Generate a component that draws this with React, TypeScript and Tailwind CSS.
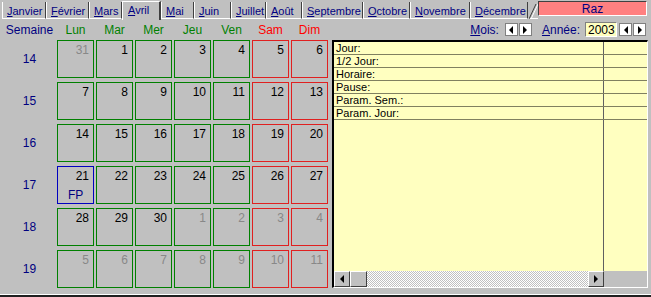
import React from 'react';

const months = [
  { name: 'Janvier', w: 44 },
  { name: 'Février', w: 43 },
  { name: 'Mars', w: 33 },
  { name: 'Avril', w: 39 },
  { name: 'Mai', w: 33 },
  { name: 'Juin', w: 37 },
  { name: 'Juillet', w: 35 },
  { name: 'Août', w: 36 },
  { name: 'Septembre', w: 61 },
  { name: 'Octobre', w: 47 },
  { name: 'Novembre', w: 60 },
  { name: 'Décembre', w: 58 },
];

const days = [
  { name: 'Lun', weekend: false },
  { name: 'Mar', weekend: false },
  { name: 'Mer', weekend: false },
  { name: 'Jeu', weekend: false },
  { name: 'Ven', weekend: false },
  { name: 'Sam', weekend: true },
  { name: 'Dim', weekend: true },
];

// [day, inMonth]
const weeks: { num: number; days: [number, boolean][] }[] = [
  { num: 14, days: [[31, false], [1, true], [2, true], [3, true], [4, true], [5, true], [6, true]] },
  { num: 15, days: [[7, true], [8, true], [9, true], [10, true], [11, true], [12, true], [13, true]] },
  { num: 16, days: [[14, true], [15, true], [16, true], [17, true], [18, true], [19, true], [20, true]] },
  { num: 17, days: [[21, true], [22, true], [23, true], [24, true], [25, true], [26, true], [27, true]] },
  { num: 18, days: [[28, true], [29, true], [30, true], [1, false], [2, false], [3, false], [4, false]] },
  { num: 19, days: [[5, false], [6, false], [7, false], [8, false], [9, false], [10, false], [11, false]] },
];

const fields = ['Jour:', '1/2 Jour:', 'Horaire:', 'Pause:', 'Param. Sem.:', 'Param. Jour:'];

function Arrow({ dir }: { dir: 'left' | 'right' }) {
  return (
    <svg width="6" height="8" viewBox="0 0 6 8">
      {dir === 'left' ? <path d="M5 0 L1 4 L5 8 Z" fill="#000" /> : <path d="M1 0 L5 4 L1 8 Z" fill="#000" />}
    </svg>
  );
}

function SpinButtons() {
  return (
    <div className="flex gap-[1px]">
      <div className="w-[13px] h-[13px] bg-white border border-[#808080] flex items-center justify-center">
        <Arrow dir="left" />
      </div>
      <div className="w-[13px] h-[13px] bg-white border border-[#808080] flex items-center justify-center">
        <Arrow dir="right" />
      </div>
    </div>
  );
}

function Label({ text }: { text: string }) {
  return (
    <span className="text-[#000080]">
      <u>{text[0]}</u>
      {text.slice(1)}
    </span>
  );
}

export default function App() {
  return (
    <div
      className="w-[651px] h-[297px] bg-[#c0c0c0] flex flex-col overflow-hidden text-[11px] leading-none"
      style={{ fontFamily: '"Liberation Sans", Arial, sans-serif' }}
    >
      {/* Month tabs */}
      <div className="h-[19px] flex items-end pl-[2px] shrink-0">
        {months.map((m) =>
          m.name === 'Avril' ? (
            <div
              key={m.name}
              className="h-[19px] flex items-start pt-[3px] pl-[5px] border-l border-t border-white border-r-2 border-r-[#404040] bg-[#c0c0c0] -mb-[1px] relative z-10"
              style={{ width: m.w }}
            >
              <Label text={m.name} />
            </div>
          ) : (
            <div
              key={m.name}
              className="h-[17px] flex items-start pt-[4px] pl-[4px] border-l border-white border-r border-r-[#404040] border-b border-b-white"
              style={{ width: m.w }}
            >
              <Label text={m.name} />
            </div>
          )
        )}
        <div className="h-[17px] w-[10px] border-b border-b-white">
          <svg width="10" height="17" viewBox="0 0 10 17">
            <path d="M1 17 L8 2" stroke="#404040" strokeWidth="1" />
            <path d="M3 17 L10 2" stroke="#ffffff" strokeWidth="1" />
          </svg>
        </div>
        <div className="self-start mt-[1px] h-[15px] w-[109px] bg-[#ff8080] border-t border-l border-[#404040] border-r border-b border-r-white border-b-white flex items-center justify-center text-[#000080] text-[12px]">
          Raz
        </div>
      </div>

      {/* Header row */}
      <div className="h-[21px] flex items-center shrink-0 text-[12px]">
        <div className="w-[57px] text-center text-[#000080] pl-[2px]">Semaine</div>
        <div className="flex gap-[2px]">
          {days.map((d) => (
            <div
              key={d.name}
              className={`w-[37px] text-center ${d.weekend ? 'text-[#ff0000]' : 'text-[#008000]'}`}
            >
              {d.name}
            </div>
          ))}
        </div>
        <div className="flex-1 flex items-center justify-end pr-[5px] text-[12px]">
          <Label text="Mois:" />
          <div className="ml-[6px]">
            <SpinButtons />
          </div>
          <div className="ml-[10px]">
            <Label text="Année:" />
          </div>
          <div className="ml-[5px] w-[32px] h-[15px] bg-[#ffffc0] border-t border-l border-[#808080] border-r border-b border-r-white border-b-white flex items-center pl-[2px] text-black">
            2003
          </div>
          <div className="ml-[2px]">
            <SpinButtons />
          </div>
        </div>
      </div>

      {/* Body */}
      <div className="flex items-start">
        <div className="flex flex-col gap-[4px]">
          {weeks.map((w) => (
            <div key={w.num} className="flex items-center h-[38px]">
              <div className="w-[57px] text-center text-[#000080] text-[12px] pl-[2px]">{w.num}</div>
              <div className="flex gap-[2px]">
                {w.days.map(([n, inMonth], i) => {
                  const isFP = w.num === 17 && i === 0;
                  const border = isFP
                    ? 'border-[#0000c0]'
                    : days[i].weekend
                      ? 'border-[#e02020]'
                      : 'border-[#008000]';
                  return (
                    <div
                      key={i}
                      className={`w-[37px] h-[38px] border ${border} flex flex-col justify-between pt-[3px] pb-[2px]`}
                    >
                      <div
                        className={`text-right pr-[4px] text-[12px] ${inMonth ? 'text-black' : 'text-[#888888]'}`}
                      >
                        {n}
                      </div>
                      {isFP && <div className="pl-[10px] text-[#000080] text-[12px]">FP</div>}
                    </div>
                  );
                })}
              </div>
            </div>
          ))}
        </div>

        {/* Detail panel */}
        <div className="ml-[4px] w-[316px] h-[248px] border-t-2 border-l-2 border-[#000000] border-r border-b border-r-white border-b-white bg-[#ffffc0] flex flex-col">
          <div className="flex-1 flex flex-col">
            {fields.map((f) => (
              <div key={f} className="h-[13px] flex border-b border-[#808060]">
                <div className="w-[270px] border-r border-[#606060] pl-[2px] flex items-center text-black">{f}</div>
                <div className="flex-1" />
              </div>
            ))}
            <div className="flex-1 flex">
              <div className="w-[270px] border-r border-[#606060]" />
              <div className="flex-1" />
            </div>
          </div>
          <div className="h-[16px] flex">
            <div className="w-[270px] flex bg-[repeating-conic-gradient(#c0c0c0_0%_25%,#ffffff_0%_50%)] bg-[length:2px_2px]">
              <div className="w-[16px] h-[16px] bg-[#c0c0c0] border border-t-white border-l-white border-r-[#404040] border-b-[#404040] flex items-center justify-center">
                <Arrow dir="left" />
              </div>
              <div className="w-[17px] h-[16px] bg-[#c0c0c0] border border-t-white border-l-white border-r-[#404040] border-b-[#404040]" />
              <div className="flex-1" />
              <div className="w-[16px] h-[16px] bg-[#c0c0c0] border border-t-white border-l-white border-r-[#404040] border-b-[#404040] flex items-center justify-center">
                <Arrow dir="right" />
              </div>
            </div>
            <div className="flex-1 bg-[#c0c0c0]" />
          </div>
        </div>
      </div>
      <div className="flex-1" />
      <div className="h-[1px] bg-white shrink-0 mt-[3px]" />
      <div className="h-[2px] bg-[#202020] shrink-0" />
    </div>
  );
}
